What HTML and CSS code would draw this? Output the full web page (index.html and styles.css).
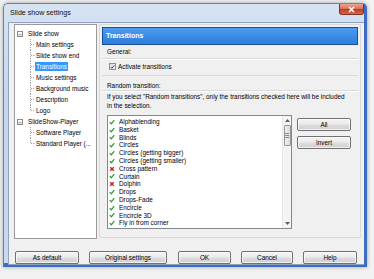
FILE: index.html
```html
<!DOCTYPE html>
<html>
<head>
<meta charset="utf-8">
<link rel="stylesheet" href="styles.css">
</head>
<body>
<div class="window">
  <div class="titlebar">
    <span class="title">Slide show settings</span>
    <span class="close"><svg width="9" height="7" viewBox="0 0 9 7"><path d="M2 1 L7 6 M7 1 L2 6" stroke="#fff" stroke-width="1.6" fill="none"/></svg></span>
  </div>
  <div class="client">
    <div class="main">
      <div class="tree">
        <div class="node root"><span class="expander">−</span><span class="label">Slide show</span></div>
        <div class="children">
          <div class="node child"><span class="elbow"></span><span class="label">Main settings</span></div>
          <div class="node child"><span class="elbow"></span><span class="label">Slide show end</span></div>
          <div class="node child"><span class="elbow"></span><span class="label selected">Transitions</span></div>
          <div class="node child"><span class="elbow"></span><span class="label">Music settings</span></div>
          <div class="node child"><span class="elbow"></span><span class="label">Background music</span></div>
          <div class="node child"><span class="elbow"></span><span class="label">Description</span></div>
          <div class="node child"><span class="elbow last"></span><span class="label">Logo</span></div>
        </div>
        <div class="node root"><span class="expander">−</span><span class="label">SlideShow-Player</span></div>
        <div class="children">
          <div class="node child"><span class="elbow"></span><span class="label">Software Player</span></div>
          <div class="node child"><span class="elbow last"></span><span class="label">Standard Player (...</span></div>
        </div>
      </div>
      <div class="page">
        <div class="page-header">Transitions</div>
        <div class="section general">General:</div>
        <div class="check-row"><span class="checkbox"><svg width="6" height="6" viewBox="0 0 6 6"><path d="M0.8 3 L2.3 4.6 L5.2 1" stroke="#2c3e66" stroke-width="1.2" fill="none"/></svg></span><span>Activate transitions</span></div>
        <div class="section random">Random transition:</div>
        <p class="hint">If you select "Random transitions", only the transitions checked here will be included<br>in the selection.</p>
        <div class="list-area">
          <div class="listbox">
            <ul class="items">
              <li><svg class="ok" viewBox="0 0 8 8"><path d="M1 4.2 L3.1 6.4 L7 1.4"/></svg>Alphablending</li>
              <li><svg class="ok" viewBox="0 0 8 8"><path d="M1 4.2 L3.1 6.4 L7 1.4"/></svg>Basket</li>
              <li><svg class="ok" viewBox="0 0 8 8"><path d="M1 4.2 L3.1 6.4 L7 1.4"/></svg>Blinds</li>
              <li><svg class="ok" viewBox="0 0 8 8"><path d="M1 4.2 L3.1 6.4 L7 1.4"/></svg>Circles</li>
              <li><svg class="ok" viewBox="0 0 8 8"><path d="M1 4.2 L3.1 6.4 L7 1.4"/></svg>Circles (getting bigger)</li>
              <li><svg class="ok" viewBox="0 0 8 8"><path d="M1 4.2 L3.1 6.4 L7 1.4"/></svg>Circles (getting smaller)</li>
              <li><svg class="no" viewBox="0 0 8 8"><path d="M1.6 1.6 L6.4 6.4 M6.4 1.6 L1.6 6.4"/></svg>Cross pattern</li>
              <li><svg class="ok" viewBox="0 0 8 8"><path d="M1 4.2 L3.1 6.4 L7 1.4"/></svg>Curtain</li>
              <li><svg class="no" viewBox="0 0 8 8"><path d="M1.6 1.6 L6.4 6.4 M6.4 1.6 L1.6 6.4"/></svg>Dolphin</li>
              <li><svg class="ok" viewBox="0 0 8 8"><path d="M1 4.2 L3.1 6.4 L7 1.4"/></svg>Drops</li>
              <li><svg class="ok" viewBox="0 0 8 8"><path d="M1 4.2 L3.1 6.4 L7 1.4"/></svg>Drops-Fade</li>
              <li><svg class="ok" viewBox="0 0 8 8"><path d="M1 4.2 L3.1 6.4 L7 1.4"/></svg>Encircle</li>
              <li><svg class="ok" viewBox="0 0 8 8"><path d="M1 4.2 L3.1 6.4 L7 1.4"/></svg>Encircle 3D</li>
              <li><svg class="ok" viewBox="0 0 8 8"><path d="M1 4.2 L3.1 6.4 L7 1.4"/></svg>Fly in from corner</li>
            </ul>
            <div class="scrollbar">
              <div class="arrow"><svg width="5" height="3" viewBox="0 0 5 3"><path d="M0 3 L2.5 0 L5 3 Z" fill="#4d6185"/></svg></div>
              <div class="thumb"><span></span><span></span><span></span></div>
              <div class="track"></div>
              <div class="arrow"><svg width="5" height="3" viewBox="0 0 5 3"><path d="M0 0 L2.5 3 L5 0 Z" fill="#4d6185"/></svg></div>
            </div>
          </div>
          <div class="side-buttons">
            <button class="btn">All</button>
            <button class="btn">Invert</button>
          </div>
        </div>
      </div>
    </div>
    <div class="footer">
      <button class="btn w-default">As default</button>
      <button class="btn w-original">Original settings</button>
      <button class="btn w-ok">OK</button>
      <button class="btn w-cancel">Cancel</button>
      <button class="btn w-help">Help</button>
    </div>
  </div>
</div>
</body>
</html>
```

FILE: styles.css
```css
* { box-sizing: border-box; }
html, body { margin: 0; padding: 0; }
body {
  width: 374px;
  height: 279px;
  background: #f2f2f2;
  font-family: "Liberation Sans", Arial, sans-serif;
  font-size: 6.4px;
  color: #000;
  overflow: hidden;
}
.window {
  margin: 3px 0 0 3px;
  width: 364px;
  height: 264px;
  background: linear-gradient(180deg, #d6e3f3 0%, #c3d5ec 40%, #c9d9ee 100%);
  border: 1px solid #6f84a2;
  border-right: 3px solid #3c6cc4;
  border-bottom: 4px solid #3c6cc4;
  border-radius: 5px 5px 0 0;
  box-shadow: 0 0 4px rgba(0,0,0,0.35);
  display: flex;
  flex-direction: column;
}
.titlebar {
  height: 18px;
  display: flex;
  align-items: flex-start;
  padding-left: 6px;
}
.title {
  font-size: 7.1px;
  line-height: 18px;
  color: #111;
}
.close {
  margin-left: auto;
  width: 25px;
  height: 11px;
  border: 1px solid #7b3326;
  border-top: none;
  border-radius: 0 0 3px 3px;
  background: linear-gradient(180deg, #eaa792 0%, #d9735c 45%, #c23c22 55%, #d86a48 100%);
  display: flex;
  align-items: center;
  justify-content: center;
}
.close svg { display: block; }
.client {
  flex: 1;
  margin-left: 4px;
  background: #f0f0f0;
  border: 1px solid #8fa3bf;
  border-right: none;
  display: flex;
  flex-direction: column;
  padding: 1px 0 0 5px;
}
.main {
  display: flex;
  gap: 2px;
  height: 215px;
}
.tree {
  width: 83px;
  height: 215px;
  background: #fff;
  border: 1px solid #9a9a9a;
  padding: 3px 0 0 2px;
}
.node {
  display: flex;
  align-items: center;
  height: 11px;
}
.expander {
  width: 6px;
  height: 6px;
  border: 1px solid #8a8a8a;
  background: linear-gradient(180deg, #fff, #e4e4e4);
  font-size: 5px;
  line-height: 4px;
  text-align: center;
  color: #333;
  margin-right: 4px;
  overflow: hidden;
}
.label {
  white-space: nowrap;
  padding: 0 1px;
  line-height: 9px;
}
.label.selected {
  background: #3399ff;
  color: #fff;
}
.children { padding-left: 13px; }
.elbow {
  width: 5px;
  height: 11px;
  margin-right: 0;
  background-image:
    repeating-linear-gradient(180deg, #a0a0a0 0 1px, transparent 1px 2px),
    repeating-linear-gradient(90deg, #a0a0a0 0 1px, transparent 1px 2px);
  background-size: 1px 11px, 4px 1px;
  background-position: 0 0, 1px 5px;
  background-repeat: no-repeat;
}
.elbow.last { background-size: 1px 6px, 4px 1px; }
.page {
  width: 262px;
  height: 214px;
  border: 1px solid #d9d9d9;
  padding: 2px 2px 0 2px;
  display: flex;
  flex-direction: column;
}
.page-header {
  height: 18px;
  background: linear-gradient(180deg, #4c9cf0 0%, #3b8ce6 50%, #2f7fdb 100%);
  border: 1px solid #1b4d9a;
  color: #fff;
  font-weight: bold;
  font-size: 7px;
  line-height: 16px;
  padding-left: 3px;
}
.section {
  padding-left: 5px;
  border-bottom: 1px solid #dadada;
  box-shadow: 0 1px 0 #fff;
}
.general { height: 14px; line-height: 13px; }
.random { height: 16px; padding-top: 5px; line-height: 10px; margin-top: 1px; border-top: 1px solid #dadada; }
.check-row {
  height: 15px;
  display: flex;
  align-items: center;
  padding-left: 7px;
  gap: 2px;
}
.checkbox {
  width: 7px;
  height: 7px;
  border: 1px solid #8e8f8f;
  background: linear-gradient(135deg, #dcdcdc, #fbfbfb);
  display: flex;
  align-items: center;
  justify-content: center;
}
.checkbox svg { display: block; }
.hint {
  margin: 1px 0 0 0;
  padding-left: 5px;
  line-height: 9px;
  white-space: nowrap;
}
.list-area {
  display: flex;
  gap: 5px;
  margin-top: 5px;
  padding-left: 5px;
}
.listbox {
  width: 185px;
  height: 114px;
  background: #fff;
  border: 1px solid #828790;
  display: flex;
}
.items {
  flex: 1;
  list-style: none;
  margin: 0;
  padding: 2px 0 0 1px;
}
.items li {
  height: 7.8px;
  line-height: 7.8px;
  display: flex;
  align-items: center;
  white-space: nowrap;
}
.items svg {
  width: 6px;
  height: 6px;
  margin-right: 4px;
  fill: none;
  stroke-width: 1.7;
  flex: none;
}
.items svg.ok { stroke: #2e9b2e; }
.items svg.no { stroke: #d41515; }
.scrollbar {
  width: 9px;
  background: #f4f4f4;
  border-left: 1px solid #e8e8e8;
  display: flex;
  flex-direction: column;
}
.arrow {
  height: 9px;
  display: flex;
  align-items: center;
  justify-content: center;
}
.arrow svg { display: block; }
.thumb {
  height: 21px;
  margin: 0 0.5px;
  border: 1px solid #979797;
  border-radius: 1px;
  background: linear-gradient(90deg, #f0f0f0, #dadada);
  display: flex;
  flex-direction: column;
  justify-content: center;
  align-items: center;
  gap: 1px;
}
.thumb span { width: 4px; height: 1px; background: #8a8a8a; }
.track { flex: 1; }
.side-buttons {
  display: flex;
  flex-direction: column;
  gap: 5px;
  padding-top: 3px;
}
.btn {
  font-family: "Liberation Sans", Arial, sans-serif;
  font-size: 6.4px;
  color: #000;
  height: 13px;
  padding: 0;
  border: 1px solid #707070;
  border-radius: 2px;
  background: linear-gradient(180deg, #f3f3f3 0%, #ebebeb 48%, #dddddd 52%, #cfcfcf 100%);
  box-shadow: inset 0 0 0 1px rgba(255,255,255,0.7);
  line-height: 11px;
  text-align: center;
}
.side-buttons .btn { width: 54px; }
.footer {
  display: flex;
  gap: 10px;
  padding: 12px 0 0 1px;
}
.w-default { width: 64px; }
.w-original { width: 78px; }
.w-ok { width: 53px; margin-left: 1px; }
.w-cancel { width: 52px; }
.w-help { width: 54px; }
```
